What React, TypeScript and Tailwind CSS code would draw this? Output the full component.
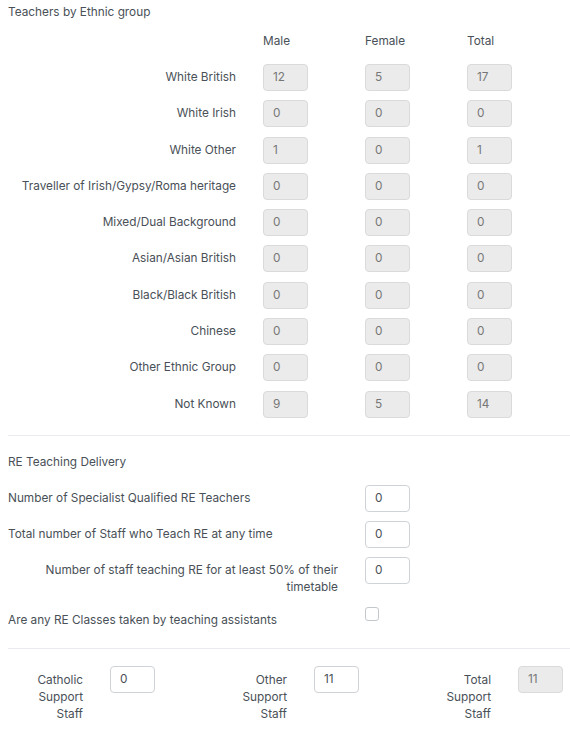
import React from "react";

const rows: [string, string, string, string][] = [
  ["White British", "12", "5", "17"],
  ["White Irish", "0", "0", "0"],
  ["White Other", "1", "0", "1"],
  ["Traveller of Irish/Gypsy/Roma heritage", "0", "0", "0"],
  ["Mixed/Dual Background", "0", "0", "0"],
  ["Asian/Asian British", "0", "0", "0"],
  ["Black/Black British", "0", "0", "0"],
  ["Chinese", "0", "0", "0"],
  ["Other Ethnic Group", "0", "0", "0"],
  ["Not Known", "9", "5", "14"],
];

function Box({ v, disabled }: { v: string; disabled?: boolean }) {
  return (
    <div
      className={
        "w-[45px] h-[27px] shrink-0 rounded-[4px] border flex items-center pl-[9px] text-[11.8px] " +
        (disabled
          ? "bg-[#ebebeb] border-[#dadada] text-[#777777]"
          : "bg-white border-[#cfd2d6] text-[#495057]")
      }
    >
      {v}
    </div>
  );
}

export default function App() {
  return (
    <div
      className="w-[570px] min-h-[730px] overflow-hidden bg-white text-[#495057] text-[11.8px] leading-[17px]"
      style={{ fontFamily: "Inter, 'Noto Sans', sans-serif" }}
    >
      <div className="px-2 pt-[4px]">
        <div className="h-[17px]">Teachers by Ethnic group</div>
        <div className="flex mt-[12px] h-[17px]">
          <div className="w-[228px] shrink-0" />
          <div className="w-[27px] shrink-0" />
          <div className="w-[102px] shrink-0">Male</div>
          <div className="w-[102px] shrink-0">Female</div>
          <div className="w-[102px] shrink-0">Total</div>
        </div>
        <div className="flex flex-col gap-[9.3px] mt-[14px]">
          {rows.map((r) => (
            <div key={r[0]} className="flex items-center">
              <div className="w-[228px] shrink-0 text-right">{r[0]}</div>
              <div className="w-[27px] shrink-0" />
              <div className="w-[102px] shrink-0"><Box v={r[1]} disabled /></div>
              <div className="w-[102px] shrink-0"><Box v={r[2]} disabled /></div>
              <div className="w-[102px] shrink-0"><Box v={r[3]} disabled /></div>
            </div>
          ))}
        </div>
      </div>
      <div className="ml-2 mt-[17px] border-t border-[#e9ebee]" />
      <div className="px-2">
        <div className="mt-[18px] h-[17px]">RE Teaching Delivery</div>
        <div className="flex flex-col gap-[9px] mt-[14.5px]">
          <div className="flex items-center">
            <div className="w-[330px] shrink-0">Number of Specialist Qualified RE Teachers</div>
            <div className="w-[27px] shrink-0" />
            <Box v="0" />
          </div>
          <div className="flex items-center">
            <div className="w-[330px] shrink-0">Total number of Staff who Teach RE at any time</div>
            <div className="w-[27px] shrink-0" />
            <Box v="0" />
          </div>
          <div className="flex items-start">
            <div className="w-[330px] shrink-0 text-right pt-[5px]">
              Number of staff teaching RE for at least 50% of their timetable
            </div>
            <div className="w-[27px] shrink-0" />
            <Box v="0" />
          </div>
        </div>
        <div className="flex items-start mt-[10.5px]">
          <div className="w-[330px] shrink-0 pt-[5px]">Are any RE Classes taken by teaching assistants</div>
          <div className="w-[27px] shrink-0" />
          <div className="w-[14px] h-[14px] shrink-0 rounded-[3px] border border-[#c4c8cc] bg-white" />
        </div>
      </div>
      <div className="ml-2 mt-[19px] border-t border-[#e9ebee]" />
      <div className="px-2 flex mt-[17px]">
        {[
          ["Catholic Support Staff", "0", false],
          ["Other Support Staff", "11", false],
          ["Total Support Staff", "11", true],
        ].map(([l, v, d]) => (
          <div key={l as string} className="flex w-[204px] shrink-0 items-start">
            <div className="w-[75px] shrink-0 text-right pt-[6px] pl-[10px]">{l as string}</div>
            <div className="w-[27px] shrink-0" />
            <Box v={v as string} disabled={d as boolean} />
          </div>
        ))}
      </div>
    </div>
  );
}
